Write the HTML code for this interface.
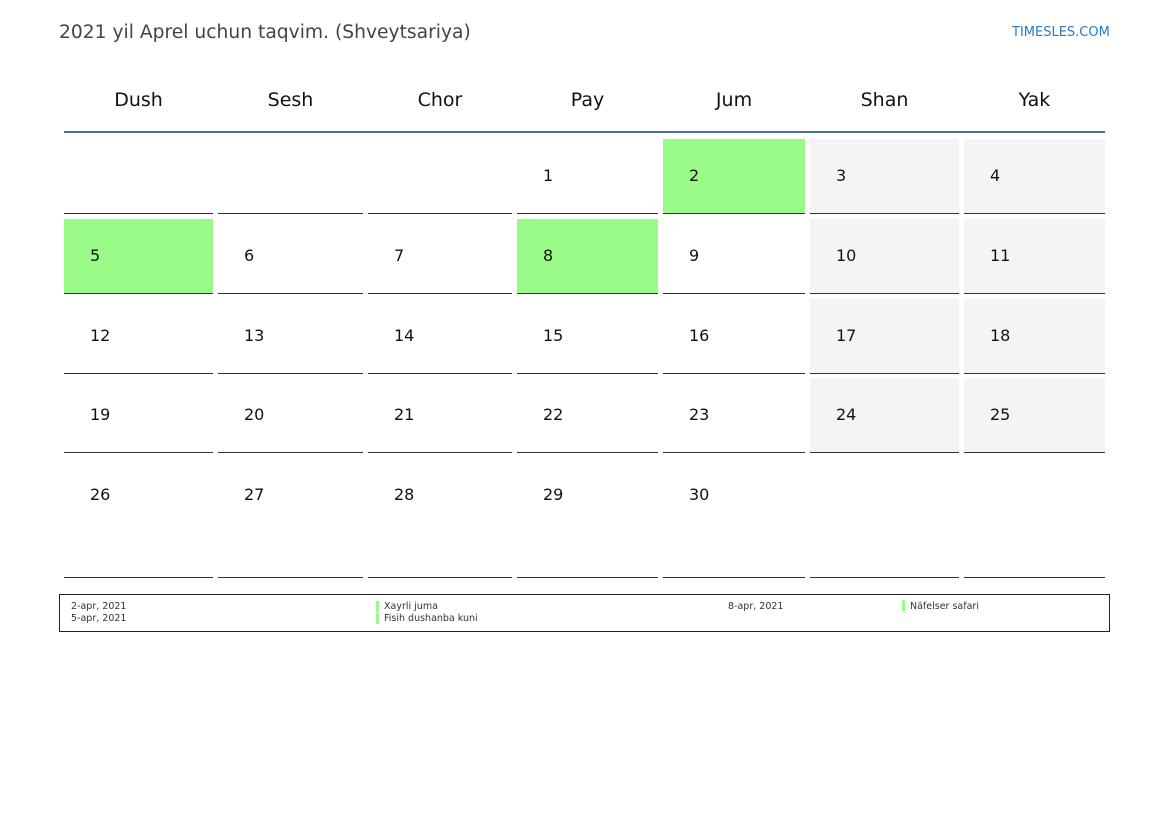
<!DOCTYPE html>
<html><head><meta charset="utf-8"><style>
body{margin:0;background:#fff;font-family:"DejaVu Sans","Liberation Sans",sans-serif;}
#w{position:relative;width:1169px;height:827px;overflow:hidden;}
.a{position:absolute;}
.t{left:59px;top:22px;font-size:18.7px;color:#444;}
.logo{left:1012px;top:25px;font-size:13px;color:#2a7ac0;}
.h{top:89px;font-size:19px;color:#111;text-align:center;}
.c{position:absolute;border-bottom:1px solid #333;box-sizing:border-box;}
.n{position:absolute;left:26px;font-size:16px;color:#111;}
.g{background:#9bfb89;}
.s{background:#f4f4f4;}
.leg{left:59px;top:594px;width:1051px;height:38px;border:1px solid #222;box-sizing:border-box;font-size:9.5px;color:#333;}
.bar{position:absolute;width:3px;height:11px;background:#9bfb89;}
</style></head><body><div id="w">
<div class="a t">2021 yil Aprel uchun taqvim. (Shveytsariya)</div>
<div class="a logo">TIMESLES.COM</div>
<div class="a" style="left:64px;top:131px;width:1041px;height:2px;background:#4f6f98"></div>
<div class="a leg">
<div class="a" style="left:11px;top:6px">2-apr, 2021</div>
<div class="a" style="left:11px;top:18px">5-apr, 2021</div>
<div class="bar" style="left:316px;top:6px"></div>
<div class="a" style="left:324px;top:6px">Xayrli juma</div>
<div class="bar" style="left:316px;top:18px"></div>
<div class="a" style="left:324px;top:18px">Fisih dushanba kuni</div>
<div class="a" style="left:668px;top:6px">8-apr, 2021</div>
<div class="bar" style="left:842px;top:5px"></div>
<div class="a" style="left:850px;top:6px">Näfelser safari</div>
</div>
</div>
<script>
var cols=[[64,213],[218,363],[368,512],[517,658],[663,805],[810,959],[964,1105]];
var names=["Dush","Sesh","Chor","Pay","Jum","Shan","Yak"];
var rows=[[139,214],[219,294],[299,374],[378,453],[458,578]];
var w=document.getElementById('w'),h='';
cols.forEach(function(c,i){h+='<div class="a h" style="left:'+c[0]+'px;width:'+(c[1]-c[0])+'px">'+names[i]+'</div>';});
var green={2:1,5:1,8:1};
for(var r=0;r<5;r++)for(var i=0;i<7;i++){
 var d=r*7+i-2;var c=cols[i],ro=rows[r];
 var cls='c';
 if(d>=1&&d<=30){if(green[d])cls+=' g';else if(i>=5)cls+=' s';}
 var txt=(d>=1&&d<=30)?'<div class="n" style="top:'+(r==4?27:27)+'px">'+d+'</div>':'';
 h+='<div class="'+cls+'" style="left:'+c[0]+'px;top:'+ro[0]+'px;width:'+(c[1]-c[0])+'px;height:'+(ro[1]-ro[0])+'px">'+txt+'</div>';
}
w.insertAdjacentHTML('beforeend',h);
</script>
</body></html>
